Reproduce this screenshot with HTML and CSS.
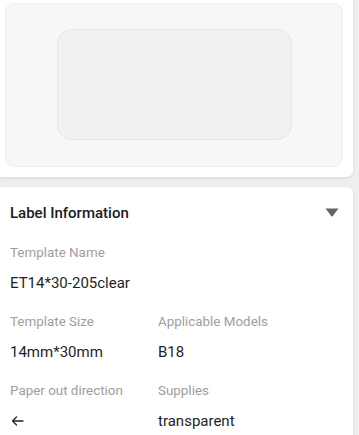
FILE: index.html
```html
<!DOCTYPE html>
<html>
<head>
<meta charset="utf-8">
<link rel="stylesheet" href="styles.css">
</head>
<body>
<div class="page">
  <section class="card preview-card">
    <div class="preview">
      <div class="label-shape"></div>
    </div>
  </section>
  <section class="card info-card">
    <div class="info-header">
      <span class="info-title">Label Information</span>
      <svg class="caret" width="14" height="9" viewBox="0 0 14 9"><path d="M0.5 0.5 H13.5 L7.6 8.2 Q7 8.8 6.4 8.2 Z" fill="#666"/></svg>
    </div>
    <div class="field">
      <div class="field-label">Template Name</div>
      <div class="field-value">ET14*30-205clear</div>
    </div>
    <div class="grid">
      <div class="field">
        <div class="field-label">Template Size</div>
        <div class="field-value">14mm*30mm</div>
      </div>
      <div class="field">
        <div class="field-label">Applicable Models</div>
        <div class="field-value">B18</div>
      </div>
      <div class="field">
        <div class="field-label">Paper out direction</div>
        <div class="field-value"><svg class="arrow" width="13" height="10" viewBox="0 0 13 10"><path d="M12 5 H1.5 M5.5 1 L1.5 5 L5.5 9" fill="none" stroke="#222" stroke-width="1.3" stroke-linecap="round" stroke-linejoin="round"/></svg></div>
      </div>
      <div class="field">
        <div class="field-label">Supplies</div>
        <div class="field-value">transparent</div>
      </div>
    </div>
  </section>
</div>
</body>
</html>
```

FILE: styles.css
```css
* { box-sizing: border-box; }
html, body {
  margin: 0;
  padding: 0;
  background: #eeeeee;
  font-family: Roboto, "Liberation Sans", sans-serif;
  overflow: hidden;
}
.page {
  width: 359px;
  height: 435px;
  padding-right: 6px;
  display: flex;
  flex-direction: column;
  gap: 10px;
}
.card {
  background: #ffffff;
  box-shadow: 0 1px 3px rgba(0,0,0,0.10);
}
.preview-card {
  margin-top: -10px;
  padding: 13px 10px 10px 5px;
  border-radius: 0 6px 6px 0;
}
.preview {
  height: 164px;
  background: #f7f7f7;
  border: 1px solid #f0f0f0;
  border-radius: 9px;
  display: flex;
  align-items: center;
  justify-content: center;
}
.label-shape {
  width: 235px;
  height: 111px;
  margin-top: -1px;
  background: #f1f1f1;
  border: 1px solid #e5e5e5;
  border-radius: 15px;
}
.info-card {
  flex: 1;
  border-radius: 0 6px 0 0;
  padding: 16px 14px 0 10px;
}
.info-header {
  height: 20px;
  display: flex;
  align-items: center;
  justify-content: space-between;
  margin-bottom: 20px;
}
.info-title {
  font-size: 15px;
  font-weight: 500;
  color: #1a1a1a;
  line-height: 20px;
}
.caret { display: block; margin-top: -1px; }
.field-label {
  font-size: 13.4px;
  line-height: 20px;
  color: #9e9e9e;
  margin-bottom: 10px;
}
.field-value {
  font-size: 15px;
  line-height: 20px;
  color: #1f1f1f;
  height: 20px;
  display: flex;
  align-items: center;
}
.arrow { display: block; margin-left: 1px; }
.grid {
  display: grid;
  grid-template-columns: 148px 1fr;
  row-gap: 19px;
  margin-top: 19px;
}
```
